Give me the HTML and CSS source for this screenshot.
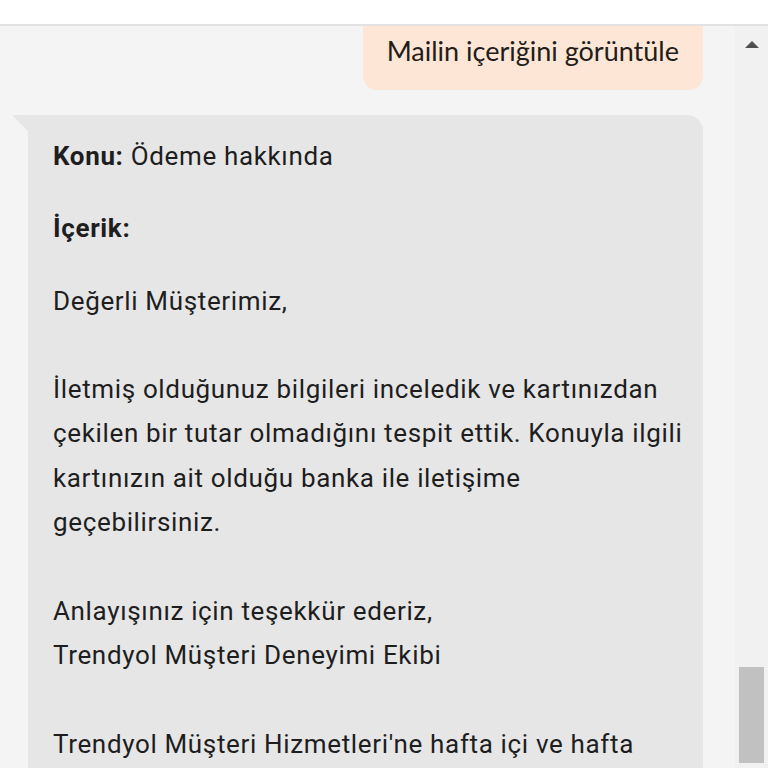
FILE: index.html
```html
<!DOCTYPE html>
<html lang="tr">
<head>
<meta charset="utf-8">
<link rel="stylesheet" href="styles.css">
</head>
<body>
<div class="header"></div>
<div class="main">
  <div class="chat">
    <div class="pill-row">
      <div class="pill">Mailin içeriğini görüntüle</div>
    </div>
    <div class="bubble">
      <p class="field"><b>Konu:</b> Ödeme hakkında</p>
      <p class="field"><b>İçerik:</b></p>
      <div class="body">Değerli Müşterimiz,<br><br>İletmiş olduğunuz bilgileri inceledik ve kartınızdan çekilen bir tutar olmadığını tespit ettik. Konuyla ilgili kartınızın ait olduğu banka ile iletişime geçebilirsiniz.<br><br>Anlayışınız için teşekkür ederiz,<br>Trendyol Müşteri Deneyimi Ekibi<br><br>Trendyol Müşteri Hizmetleri'ne hafta içi ve hafta sonu 09:00 - 24:00 saatleri arasında ulaşabilirsiniz.</div>
    </div>
  </div>
  <div class="scrollbar">
    <div class="arrow"></div>
    <div class="thumb"></div>
  </div>
</div>
</body>
</html>
```
FILE: styles.css
```css
html, body {
  margin: 0;
  padding: 0;
  height: 768px;
  overflow: hidden;
}
body {
  font-family: Roboto, "Liberation Sans", sans-serif;
  color: #222;
  background: #f3f3f3;
}
.header {
  height: 24px;
  background: #fff;
  border-bottom: 2px solid #e2e2e2;
}
.main {
  display: flex;
  height: 742px;
}
.chat {
  flex: 1;
  overflow: hidden;
  background: #f4f4f4;
}
.pill-row {
  display: flex;
  justify-content: flex-end;
  padding-right: 32px;
}
.pill {
  background: #fde6d5;
  border-radius: 0 0 14px 14px;
  height: 64px;
  box-sizing: border-box;
  padding: 0 24px 16px 24px;
  display: flex;
  align-items: center;
  font-family: Lato, "Open Sans", sans-serif;
  font-size: 27px;
  color: #231c18;
}
.bubble {
  position: relative;
  margin: 25px 32px 0 28px;
  background: #e6e6e6;
  border-radius: 0 16px 0 0;
  padding: 19px 20px 40px 25px;
  font-family: Roboto, sans-serif;
  font-size: 26px;
  letter-spacing: 0.65px;
  line-height: 44.3px;
  color: #1e1e1e;
}
.bubble::before {
  content: "";
  position: absolute;
  left: -16px;
  top: 0;
  border-top: 16px solid #e6e6e6;
  border-left: 16px solid transparent;
}
.field {
  margin: 0 0 28px 0;
}
.field b {
  font-weight: 700;
}
.body {
  margin: 0;
}
.scrollbar {
  width: 33px;
  background: #f1f1f1;
  position: relative;
}
.arrow {
  width: 0;
  height: 0;
  margin: 15px auto 0;
  border-left: 7px solid transparent;
  border-right: 7px solid transparent;
  border-bottom: 7px solid #505050;
}
.thumb {
  position: absolute;
  left: 4px;
  right: 4px;
  top: 641px;
  height: 96px;
  background: #c1c1c1;
}
```
